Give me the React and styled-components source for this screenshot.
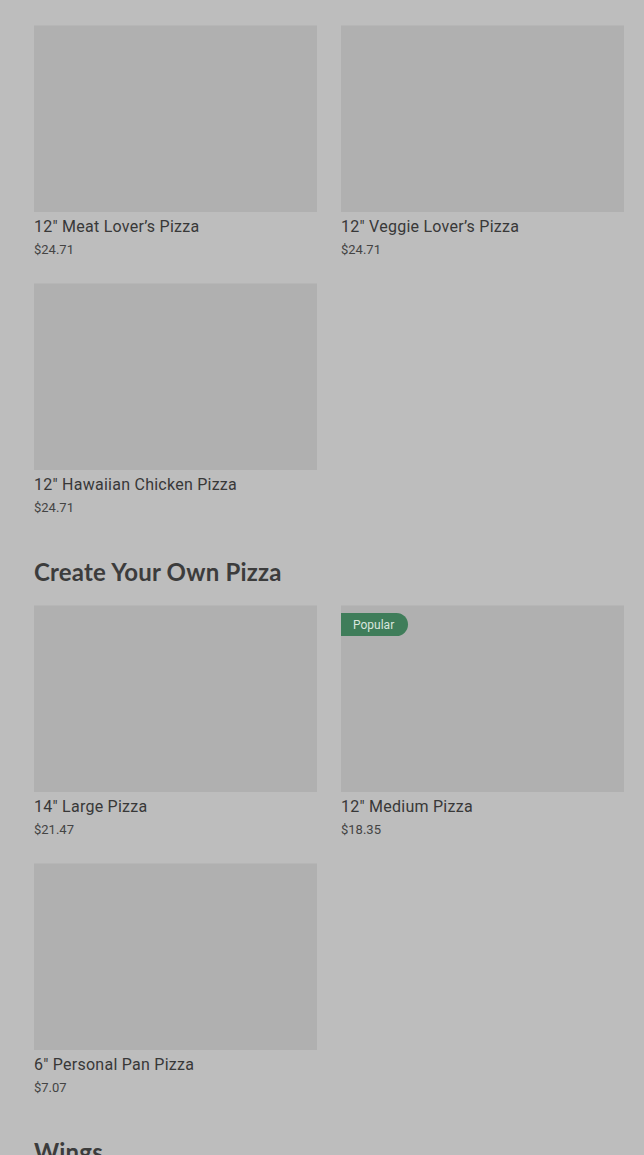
import React from "react";
import styled, { createGlobalStyle } from "styled-components";

const Global = createGlobalStyle`
  html, body { margin: 0; padding: 0; background: #bdbdbd; }
  body { font-family: Roboto, "Liberation Sans", sans-serif; }
`;

const Page = styled.div`
  background: #bdbdbd;
  padding: 25px 20px 0 34px;
  height: 1155px;
  box-sizing: border-box;
  overflow: hidden;
`;

const Section = styled.section`
  display: flex;
  flex-direction: column;
  margin-bottom: 41px;
`;

const Heading = styled.h2`
  margin: 0 0 19px 0;
  font-family: Lato, "Open Sans", sans-serif;
  font-weight: 700;
  font-size: 24px;
  line-height: 28px;
  color: #3c3c3c;
  letter-spacing: 0.2px;
`;

const Grid = styled.div`
  display: grid;
  grid-template-columns: 283px 283px;
  column-gap: 24px;
  row-gap: 24px;
`;

const Card = styled.div`
  display: flex;
  flex-direction: column;
  position: relative;
`;

const Thumb = styled.div`
  height: 187px;
  background: #b0b0b0;
  border-top: 1px solid #b6b6b6;
  box-sizing: border-box;
`;

const Title = styled.div`
  margin-top: 5px;
  font-size: 16px;
  line-height: 20px;
  font-weight: 400;
  letter-spacing: 0.25px;
  color: #383838;
`;

const Price = styled.div`
  margin-top: 4px;
  font-size: 13px;
  line-height: 18px;
  color: #444444;
`;

const Badge = styled.span`
  position: absolute;
  top: 8px;
  left: 0;
  height: 23px;
  padding: 0 14px 0 12px;
  display: inline-flex;
  align-items: center;
  background: #3f7d5a;
  color: #d9e6de;
  font-size: 12px;
  border-radius: 0 12px 12px 0;
`;

const sections = [
  {
    title: null,
    items: [
      { name: '12" Meat Lover\u2019s Pizza', price: "$24.71" },
      { name: '12" Veggie Lover\u2019s Pizza', price: "$24.71" },
      { name: '12" Hawaiian Chicken Pizza', price: "$24.71" },
    ],
  },
  {
    title: "Create Your Own Pizza",
    items: [
      { name: '14" Large Pizza', price: "$21.47" },
      { name: '12" Medium Pizza', price: "$18.35", badge: "Popular" },
      { name: '6" Personal Pan Pizza', price: "$7.07" },
    ],
  },
  { title: "Wings", items: [] },
];

export default function App() {
  return (
    <>
      <Global />
      <Page>
        {sections.map((s, i) => (
          <Section key={i}>
            {s.title && <Heading>{s.title}</Heading>}
            {s.items.length > 0 && (
              <Grid>
                {s.items.map((it) => (
                  <Card key={it.name}>
                    <Thumb />
                    {it.badge && <Badge>{it.badge}</Badge>}
                    <Title>{it.name}</Title>
                    <Price>{it.price}</Price>
                  </Card>
                ))}
              </Grid>
            )}
          </Section>
        ))}
      </Page>
    </>
  );
}
